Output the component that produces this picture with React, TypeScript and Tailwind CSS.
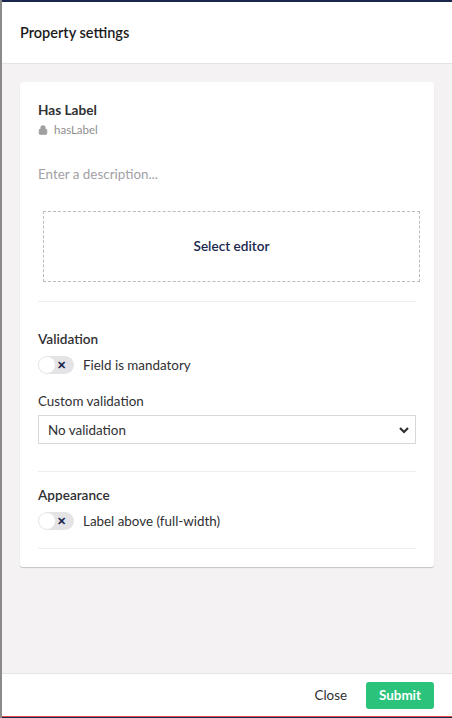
import { Lock } from 'lucide-react';

function Toggle({ label }: { label: string }) {
  return (
    <div className="flex items-center gap-[9px]">
      <div className="relative w-[36px] h-[18px] rounded-full bg-[#e4e4e7] flex items-center">
        <div className="absolute left-[1px] top-[1px] w-[16px] h-[16px] rounded-full bg-white" />
        <span className="absolute right-[8px] top-[0px] text-[11px] leading-[18px] font-bold text-[#1b264f]">✕</span>
      </div>
      <span className="text-[13.4px] text-[#303033]">{label}</span>
    </div>
  );
}

export default function App() {
  return (
    <div className="w-[452px] h-[718px] bg-[#1b264f] flex" style={{ fontFamily: 'Lato, "Open Sans", sans-serif' }}>
      <div className="w-[2px] bg-[#8a8a8a] shrink-0" />
      <div className="flex-1 flex flex-col mt-[2px] mb-[1px] bg-[#f4f2f2]">
        {/* Header */}
        <div className="h-[62px] bg-white border-b border-[#e4e4e4] flex items-center px-[18px]">
          <h1 className="text-[14.5px] font-semibold text-[#1b1b1b]">Property settings</h1>
        </div>

        {/* Body */}
        <div className="flex-1 px-[18px] pt-[18px]">
          <div className="bg-white rounded-[3px] shadow-[0_1px_1px_rgba(0,0,0,0.2)] px-[18px] pt-[18px] pb-[18px]">
            <div className="text-[13.6px] font-bold text-[#303033] leading-[20px]">Has Label</div>
            <div className="flex items-center gap-[6px] mt-[1px] text-[11.5px] text-[#8f8f8f] leading-[18px]">
              <Lock size={10} fill="#a0a0a0" strokeWidth={2.5} className="text-[#a0a0a0]" />
              hasLabel
            </div>
            <div className="mt-[25px] text-[13.4px] text-[#a2a1a6] leading-[20px]">Enter a description...</div>

            <div className="mt-[27px] ml-[5px] mr-[-4px] h-[71px] border border-dashed border-[#bbbbbb] flex items-center justify-center">
              <span className="text-[13.6px] font-semibold text-[#1b264f]">Select editor</span>
            </div>

            <div className="mt-[19px] border-t border-[#eeeeee]" />

            <div className="mt-[28px] text-[13.6px] font-semibold text-[#303033] leading-[18px]">Validation</div>
            <div className="mt-[7px]">
              <Toggle label="Field is mandatory" />
            </div>
            <div className="mt-[17px] text-[13.4px] text-[#303033] leading-[18px]">Custom validation</div>
            <div className="mt-[5px] h-[29px] border border-[#d8d7d9] flex items-center justify-between pl-[9px] pr-[5px]">
              <span className="text-[13.4px] text-[#303033]">No validation</span>
              <svg width="12" height="12" viewBox="0 0 12 12">
                <path d="M2 4 L6 8 L10 4" stroke="#303033" strokeWidth="2.2" fill="none" />
              </svg>
            </div>

            <div className="mt-[27px] border-t border-[#eeeeee]" />

            <div className="mt-[14px] text-[13.6px] font-semibold text-[#303033] leading-[18px]">Appearance</div>
            <div className="mt-[7px]">
              <Toggle label="Label above (full-width)" />
            </div>

            <div className="mt-[17px] border-t border-[#eeeeee]" />
          </div>
        </div>

        {/* Footer */}
        <div className="h-[44px] bg-white border-t border-[#e4e4e4] flex items-center justify-end gap-[19px] px-[18px] border-b border-b-[#e84a4a]">
          <button className="text-[13.4px] text-[#303033]">Close</button>
          <button className="h-[27px] px-[13px] rounded-[3px] bg-[#2bc37c] text-white text-[13.4px] font-bold">Submit</button>
        </div>
      </div>
    </div>
  );
}
